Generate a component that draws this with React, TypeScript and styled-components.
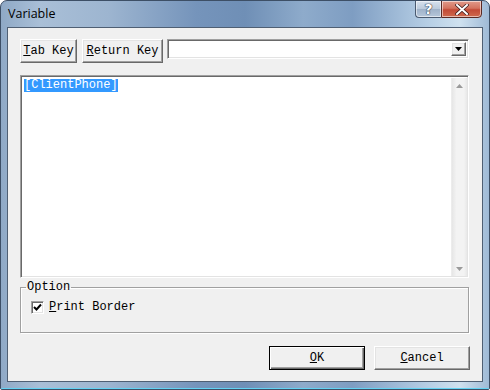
import React from 'react'
import styled, { createGlobalStyle, css } from 'styled-components'

const GlobalStyle = createGlobalStyle`
    html, body {
        margin: 0;
        padding: 0;
        overflow: hidden;
        background: #ffffff;
    }
`;

const App: React.FC = () => {
    return (
        <>
            <GlobalStyle />
            <Window>
                <TitleBar>
                    <Title>Variable</Title>
                    <CaptionButtons>
                        <HelpButton>?</HelpButton>
                        <CloseButton>
                            <svg width="14" height="11" viewBox="0 0 14 11">
                                <path d="M2 1 L12 10 M12 1 L2 10" stroke="#3a1a1a" strokeWidth="3.4" strokeLinecap="square" />
                                <path d="M2 1 L12 10 M12 1 L2 10" stroke="#ffffff" strokeWidth="2" strokeLinecap="square" />
                            </svg>
                        </CloseButton>
                    </CaptionButtons>
                </TitleBar>
                <Client>
                    <Toolbar>
                        <KeyButton $width={57}><u>T</u>ab Key</KeyButton>
                        <KeyButton $width={81}><u>R</u>eturn Key</KeyButton>
                        <Combo>
                            <ComboArrow>
                                <svg width="7" height="4" viewBox="0 0 7 4">
                                    <path d="M0 0 H7 L3.5 4 Z" fill="#000" />
                                </svg>
                            </ComboArrow>
                        </Combo>
                    </Toolbar>
                    <Editor>
                        <EditorText>
                            <Selected>[ClientPhone]</Selected>
                        </EditorText>
                        <ScrollBar>
                            <ScrollArrow viewBox="0 0 7 4">
                                <path d="M0 4 H7 L3.5 0 Z" fill="#9a9a9a" />
                            </ScrollArrow>
                            <ScrollArrow viewBox="0 0 7 4">
                                <path d="M0 0 H7 L3.5 4 Z" fill="#9a9a9a" />
                            </ScrollArrow>
                        </ScrollBar>
                    </Editor>
                    <Group>
                        <Legend>Option</Legend>
                        <CheckRow>
                            <CheckBox>
                                <svg width="9" height="9" viewBox="0 0 9 9">
                                    <path d="M1 4 L3.5 6.5 L8 1.5" stroke="#000" strokeWidth="2" fill="none" />
                                </svg>
                            </CheckBox>
                            <Label><u>P</u>rint Border</Label>
                        </CheckRow>
                    </Group>
                    <Footer>
                        <DialogButton $default><u>O</u>K</DialogButton>
                        <DialogButton><u>C</u>ancel</DialogButton>
                    </Footer>
                </Client>
                <BottomFrame />
            </Window>
        </>
    )
}

const Window = styled.div`
    width: 490px;
    height: 390px;
    box-sizing: border-box;
    display: flex;
    flex-direction: column;
    border: 1px solid #3d4f66;
    border-radius: 7px 7px 2px 2px;
    background: linear-gradient(90deg, #8fa9c6 0%, #a9bfd7 8%, #9db5d0 22%, #7594bb 40%, #6f8fb6 50%, #8eabcb 62%, #7e9dc2 72%, #b8d0e6 88%, #cfe1ef 94%, #9fbad6 100%);
    font-family: "Liberation Mono", "DejaVu Sans Mono", monospace;
    font-size: 12px;
    color: #000;
    overflow: hidden;
`;

const TitleBar = styled.div`
    height: 26px;
    display: flex;
    align-items: flex-start;
    justify-content: space-between;
    padding-left: 7px;
    padding-right: 7px;
    flex-shrink: 0;
`;

const Title = styled.div`
    font-family: "Open Sans", "Noto Sans", sans-serif;
    font-size: 12.5px;
    line-height: 14px;
    margin-top: 6px;
    color: #000;
`;

const CaptionButtons = styled.div`
    display: flex;
    margin-top: -1px;
`;

const capButton = css`
    height: 18px;
    box-sizing: border-box;
    display: flex;
    align-items: center;
    justify-content: center;
    border: 1px solid #4a5a70;
    box-shadow: inset 0 0 0 1px rgba(255, 255, 255, 0.55);
`;

const HelpButton = styled.div`
    ${capButton};
    width: 26px;
    border-right: none;
    border-radius: 0 0 0 4px;
    background: linear-gradient(180deg, #d8e2ee 0%, #bccbdc 48%, #9fb2c9 52%, #b6c7da 100%);
    font-family: "DejaVu Sans", sans-serif;
    font-size: 14px;
    font-weight: bold;
    color: #fff;
    text-shadow: 0 0 1px #2d3b4f, 0 0 1px #2d3b4f, 0 0 1px #2d3b4f;
`;

const CloseButton = styled.div`
    ${capButton};
    width: 41px;
    border-radius: 0 0 4px 0;
    border-color: #5a2a24;
    background: linear-gradient(180deg, #e09b8b 0%, #d4735f 45%, #c24a36 55%, #cf6a4e 100%);
`;

const Client = styled.div`
    flex: 1;
    margin: 0 6px;
    border: 1px solid #4f5f73;
    background: #f0f0f0;
    display: flex;
    flex-direction: column;
    padding: 11px 13px 11px 12px;
    min-height: 0;
`;

const Toolbar = styled.div`
    display: flex;
    align-items: flex-start;
    height: 24px;
`;

const raised = css`
    box-sizing: border-box;
    background: #f0f0f0;
    border: 1px solid;
    border-color: #ffffff #696969 #696969 #ffffff;
    box-shadow: inset -1px -1px 0 #a0a0a0, inset 1px 1px 0 #e3e3e3;
    font-family: "Liberation Mono", "DejaVu Sans Mono", monospace;
    font-size: 12px;
    color: #000;
    padding: 0;
    display: flex;
    align-items: center;
    justify-content: center;
`;

const KeyButton = styled.button<{ $width: number }>`
    ${raised};
    width: ${props => props.$width}px;
    height: 24px;
    margin-right: 5px;
    & + & {
        margin-right: 4px;
    }
`;

const Combo = styled.div`
    flex: 1;
    height: 20px;
    box-sizing: border-box;
    background: #fff;
    border: 1px solid;
    border-color: #a0a0a0 #ffffff #ffffff #a0a0a0;
    box-shadow: inset 1px 1px 0 #696969, inset -1px -1px 0 #e3e3e3;
    display: flex;
    justify-content: flex-end;
    padding: 2px;
`;

const ComboArrow = styled.div`
    ${raised};
    width: 15px;
    height: 14px;
`;

const Editor = styled.div`
    margin-top: 12px;
    height: 203px;
    box-sizing: border-box;
    background: #fff;
    border: 1px solid;
    border-color: #a0a0a0 #ffffff #ffffff #a0a0a0;
    box-shadow: inset 1px 1px 0 #696969, inset -1px -1px 0 #e3e3e3;
    display: flex;
    padding: 2px 1px 1px 2px;
`;

const EditorText = styled.div`
    flex: 1;
    padding: 1px 1px;
    line-height: 13px;
`;

const Selected = styled.span`
    background: #3399ff;
    color: #fff;
    display: inline-block;
    height: 13px;
    line-height: 13px;
`;

const ScrollBar = styled.div`
    width: 16px;
    background: linear-gradient(90deg, #e6e6e6 0%, #f3f3f3 30%, #f3f3f3 80%, #e8e8e8 100%);
    border-left: 1px solid #ececec;
    display: flex;
    flex-direction: column;
    justify-content: space-between;
    align-items: center;
    padding: 6px 0 5px;
    box-sizing: border-box;
`;

const ScrollArrow = styled.svg`
    width: 7px;
    height: 4px;
`;

const Group = styled.fieldset`
    margin: 3px 0 0;
    padding: 0 0 0 11px;
    height: 52px;
    box-sizing: border-box;
    border: 1px solid #a0a0a0;
    box-shadow: inset 1px 1px 0 #fff, 1px 1px 0 #fff;
    min-width: 0;
`;

const Legend = styled.legend`
    padding: 0 1px;
    margin-left: -6px;
    line-height: 13px;
`;

const CheckRow = styled.div`
    display: flex;
    align-items: center;
    margin-top: 6px;
`;

const CheckBox = styled.div`
    width: 13px;
    height: 13px;
    box-sizing: border-box;
    background: #fff;
    border: 1px solid;
    border-color: #a0a0a0 #ffffff #ffffff #a0a0a0;
    box-shadow: inset 1px 1px 0 #696969, inset -1px -1px 0 #e3e3e3;
    display: flex;
    align-items: center;
    justify-content: center;
    margin-left: -1px;
`;

const Label = styled.span`
    margin-left: 5px;
`;

const Footer = styled.div`
    margin-top: auto;
    display: flex;
    justify-content: flex-end;
    gap: 9px;
    margin-right: -1px;
`;

const DialogButton = styled.button<{ $default?: boolean }>`
    ${raised};
    width: 96px;
    height: 24px;
    ${props => props.$default && css`
        border-color: #000;
        box-shadow: inset 1px 1px 0 #fff, inset -1px -1px 0 #696969, inset -2px -2px 0 #a0a0a0;
    `}
`;

const BottomFrame = styled.div`
    height: 6px;
    flex-shrink: 0;
    border-bottom: 1px solid #62d3f4;
`;

export default App
